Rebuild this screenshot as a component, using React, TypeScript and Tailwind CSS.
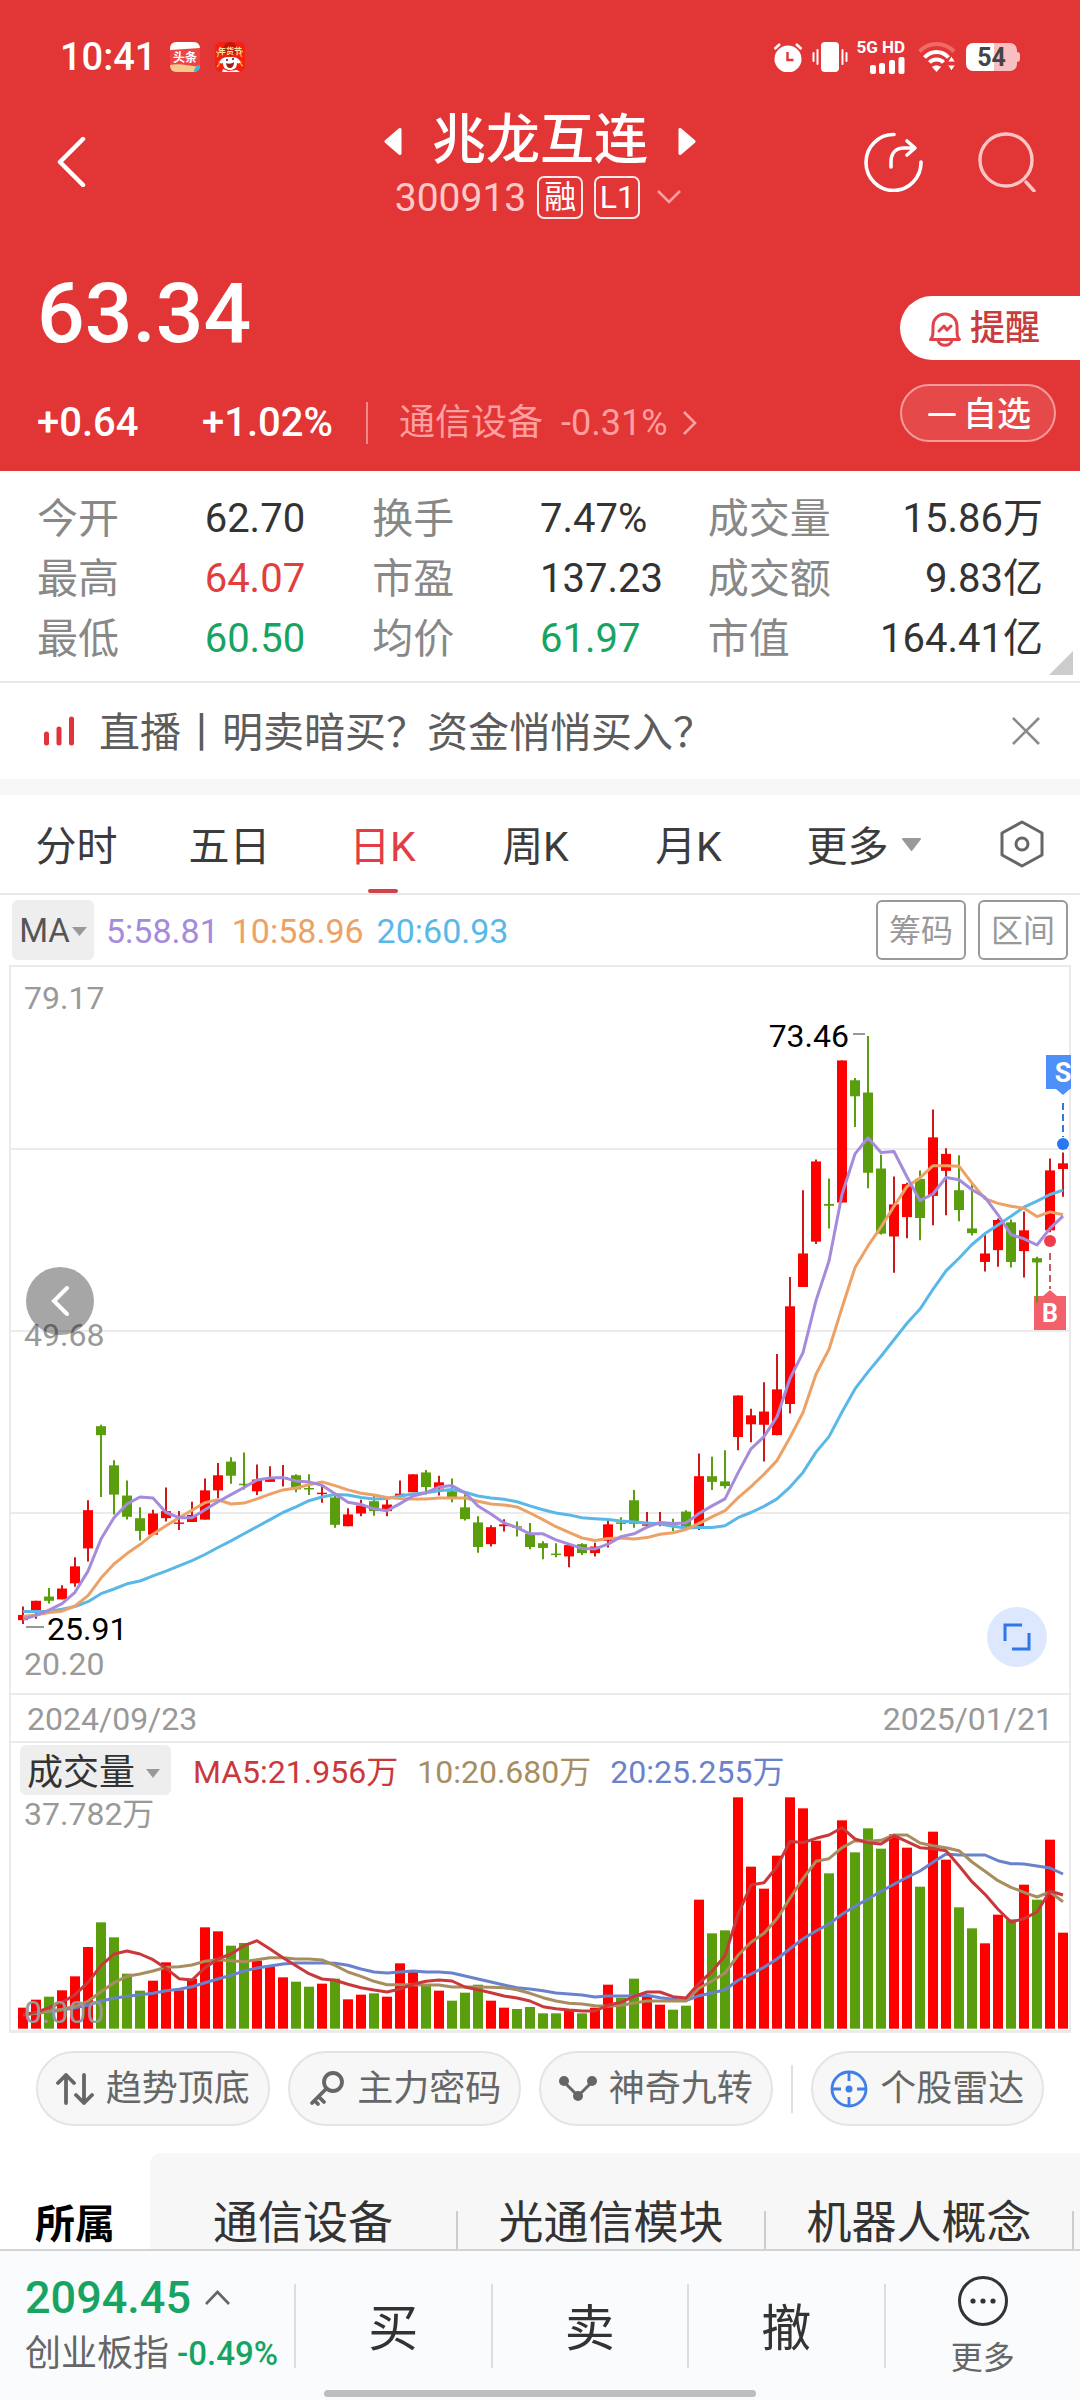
import { useState } from "react";
import type { ReactNode } from "react";

const UP = "#ff0000";
const DOWN = "#5a9e0e";

const STEP = 13;
const candleX = (i: number) => 12 + i * STEP;

// direction, high, body top, body bottom, low
type Candle = [1 | 0, number, number, number, number];

const CANDLES: Candle[] = [
  [1, 1370, 1388, 1399, 1407], [1, 1358, 1358, 1382, 1396], [0, 1331, 1349, 1358, 1364],
  [1, 1325, 1332, 1355, 1355], [1, 1266, 1285, 1321, 1328], [1, 1145, 1166, 1247, 1275],
  [0, 985, 988, 1007, 1138], [0, 1060, 1071, 1133, 1175], [0, 1103, 1135, 1180, 1186],
  [0, 1160, 1183, 1210, 1230], [1, 1165, 1173, 1218, 1218], [1, 1118, 1168, 1183, 1190],
  [1, 1168, 1192, 1195, 1208], [1, 1148, 1176, 1191, 1191], [1, 1099, 1124, 1186, 1186],
  [1, 1066, 1092, 1124, 1140], [0, 1054, 1063, 1093, 1110], [0, 1044, 1110, 1113, 1122],
  [1, 1069, 1101, 1126, 1134], [1, 1073, 1099, 1106, 1106], [1, 1070, 1096, 1099, 1116],
  [0, 1090, 1092, 1122, 1128], [0, 1090, 1119, 1122, 1134], [1, 1112, 1129, 1132, 1150],
  [0, 1136, 1139, 1197, 1203], [1, 1162, 1175, 1200, 1200], [1, 1144, 1156, 1173, 1179],
  [0, 1134, 1147, 1168, 1178], [1, 1144, 1154, 1168, 1179], [1, 1103, 1131, 1137, 1139],
  [1, 1090, 1090, 1128, 1128], [0, 1081, 1086, 1117, 1133], [1, 1093, 1107, 1120, 1135],
  [0, 1099, 1126, 1142, 1149], [0, 1132, 1160, 1185, 1188], [0, 1179, 1192, 1244, 1256],
  [1, 1198, 1202, 1238, 1243], [1, 1185, 1196, 1200, 1211], [0, 1190, 1200, 1203, 1222],
  [0, 1193, 1216, 1244, 1249], [0, 1232, 1236, 1246, 1270], [0, 1236, 1258, 1261, 1266],
  [1, 1238, 1240, 1264, 1287], [0, 1236, 1238, 1257, 1261], [1, 1235, 1243, 1257, 1264],
  [1, 1184, 1196, 1231, 1245], [0, 1181, 1192, 1195, 1209], [0, 1123, 1145, 1195, 1203],
  [1, 1170, 1196, 1199, 1203], [1, 1170, 1191, 1194, 1200], [0, 1184, 1195, 1198, 1210],
  [0, 1166, 1169, 1201, 1208], [1, 1046, 1094, 1200, 1208], [0, 1053, 1094, 1106, 1123],
  [0, 1039, 1105, 1115, 1120], [1, 923, 923, 1011, 1039], [1, 951, 965, 984, 1022],
  [1, 895, 957, 985, 1063], [1, 835, 910, 1007, 1007], [1, 672, 734, 941, 961],
  [1, 488, 622, 693, 693], [1, 423, 427, 597, 602], [0, 463, 517, 521, 569],
  [1, 213, 213, 514, 514], [0, 250, 255, 289, 354], [0, 161, 281, 451, 484],
  [0, 413, 442, 580, 582], [1, 459, 518, 586, 663], [1, 472, 475, 545, 590],
  [0, 446, 464, 547, 594], [1, 317, 376, 500, 562], [1, 399, 411, 447, 541],
  [0, 414, 488, 530, 554], [0, 475, 569, 579, 584], [1, 583, 622, 640, 660],
  [1, 548, 551, 615, 650], [0, 550, 556, 640, 652], [1, 533, 573, 617, 673],
  [0, 629, 632, 641, 726], [1, 421, 446, 573, 577], [1, 408, 431, 443, 502],
];

const PRICE_MA = [
  {
    color: "#5ab8e8",
    values: [
      1381, 1381, 1380, 1376, 1370, 1360, 1343, 1333, 1322, 1316, 1305, 1295, 1284, 1273, 1260, 1245, 1231,
      1216, 1201, 1186, 1171, 1159, 1146, 1138, 1133, 1134, 1139, 1142, 1141, 1136, 1132, 1129, 1125, 1122,
      1128, 1136, 1140, 1143, 1148, 1157, 1165, 1172, 1176, 1182, 1184, 1186, 1189, 1191, 1193, 1195, 1200,
      1204, 1203, 1203, 1199, 1182, 1171, 1158, 1142, 1117, 1086, 1043, 1010, 958, 909, 873, 840, 805, 770,
      740, 698, 659, 632, 603, 580, 562, 543, 524, 511, 497, 488,
    ],
  },
  {
    color: "#eca267",
    values: [
      1391, 1388, 1383, 1380, 1369, 1347, 1310, 1280, 1258, 1239, 1217, 1199, 1182, 1166, 1150, 1144, 1153,
      1151, 1142, 1132, 1123, 1119, 1112, 1106, 1114, 1123, 1130, 1134, 1139, 1141, 1142, 1142, 1140, 1140,
      1140, 1147, 1153, 1155, 1159, 1172, 1186, 1201, 1213, 1225, 1230, 1226, 1225, 1227, 1224, 1217, 1214,
      1207, 1194, 1180, 1167, 1140, 1116, 1090, 1061, 1012, 959, 878, 825, 737, 652, 606, 566, 522, 480, 462,
      436, 436, 437, 473, 506, 516, 522, 526, 544, 534, 540,
    ],
  },
  {
    color: "#a58bdc",
    values: [
      1397, 1389, 1378, 1364, 1340, 1295, 1227, 1182, 1153, 1138, 1140, 1171, 1182, 1182, 1165, 1148, 1133,
      1118, 1102, 1098, 1097, 1104, 1106, 1113, 1131, 1149, 1154, 1163, 1167, 1152, 1136, 1129, 1117, 1114,
      1129, 1157, 1174, 1193, 1203, 1216, 1216, 1229, 1238, 1247, 1248, 1238, 1222, 1216, 1202, 1192, 1194,
      1193, 1173, 1157, 1142, 1087, 1036, 1010, 968, 887, 832, 722, 638, 497, 411, 377, 408, 406, 460, 510,
      496, 461, 466, 487, 503, 540, 582, 591, 604, 569, 543,
    ],
  },
];

const VOLUMES = [
  983, 959, 950, 931, 889, 801, 727, 772, 881, 932, 902, 847, 931, 896, 742, 754, 797, 789, 842, 860, 892,
  905, 920, 911, 896, 958, 944, 940, 950, 850, 871, 917, 932, 962, 938, 914, 962, 983, 987, 981, 1000, 1000,
  988, 1000, 983, 914, 953, 896, 947, 974, 989, 977, 659, 760, 751, 352, 560, 626, 527, 352, 385, 482, 580,
  421, 517, 445, 506, 463, 503, 620, 455, 539, 682, 745, 790, 704, 718, 614, 659, 479, 758,
];

const VOLUME_MA = [
  {
    color: "#6a82cc",
    values: [
      1004, 1000, 996, 990, 983, 975, 963, 955, 949, 944, 940, 932, 928, 920, 908, 897, 886, 873, 864, 858,
      852, 849, 849, 849, 850, 856, 867, 876, 879, 876, 873, 876, 876, 879, 888, 897, 906, 915, 923, 927, 932,
      939, 942, 945, 951, 948, 948, 948, 946, 953, 958, 962, 947, 939, 929, 901, 882, 862, 837, 806, 776, 753,
      732, 703, 679, 657, 634, 613, 592, 573, 547, 522, 525, 525, 525, 542, 551, 552, 558, 564, 582,
    ],
  },
  {
    color: "#a88d60",
    values: [
      1004, 1000, 994, 988, 979, 964, 935, 908, 889, 882, 873, 862, 860, 855, 844, 839, 842, 845, 839, 833,
      833, 837, 837, 840, 856, 876, 889, 904, 914, 914, 914, 915, 915, 921, 921, 921, 922, 923, 929, 940, 953,
      963, 970, 972, 977, 979, 976, 969, 963, 963, 963, 963, 925, 903, 879, 826, 787, 760, 716, 655, 596, 544,
      536, 503, 482, 484, 481, 465, 465, 489, 497, 503, 512, 546, 574, 602, 622, 637, 651, 636, 665,
    ],
  },
  {
    color: "#c9393c",
    values: [
      1004, 997, 983, 967, 944, 907, 857, 822, 813, 822, 839, 865, 896, 900, 863, 837, 822, 797, 782, 807,
      833, 857, 881, 897, 901, 913, 923, 930, 936, 927, 913, 904, 900, 903, 921, 929, 938, 948, 954, 963, 980,
      986, 990, 993, 993, 976, 967, 949, 936, 936, 950, 954, 910, 874, 827, 703, 615, 608, 560, 484, 488, 475,
      465, 443, 477, 488, 492, 467, 485, 503, 506, 512, 557, 605, 643, 688, 726, 716, 696, 633, 645,
    ],
  },
];

const priceY = (v: number) => (v - 15) / 2.119;
const volumeY = (v: number) => v / 3 - 117;

function linePoints(values: number[], toY: (v: number) => number) {
  return values.map((v, i) => `${candleX(i)},${toY(v).toFixed(1)}`).join(" ");
}

const QUOTES = [
  [["今开", "62.70", "text-[#333]"], ["换手", "7.47%", "text-[#333]"], ["成交量", "15.86万", "text-[#333]"]],
  [["最高", "64.07", "text-[#e23e3e]"], ["市盈", "137.23", "text-[#333]"], ["成交额", "9.83亿", "text-[#333]"]],
  [["最低", "60.50", "text-[#17a462]"], ["均价", "61.97", "text-[#17a462]"], ["市值", "164.41亿", "text-[#333]"]],
];

const PERIODS = ["分时", "五日", "日K", "周K", "月K"];
const SECTORS = ["通信设备", "光通信模块", "机器人概念"];

function StatusBar() {
  return (
    <div className="flex h-[114px] items-center justify-between pr-[60px] pl-[60px]">
      <div className="flex items-center gap-[14px]">
        <span className="text-[38px] font-medium leading-10">10:41</span>
        <div className="flex gap-[15px]">
          <svg className="size-[30px]" viewBox="0 0 30 30">
            <defs>
              <clipPath id="tt"><rect width="30" height="30" rx="6" /></clipPath>
            </defs>
            <g clipPath="url(#tt)">
              <rect width="30" height="30" fill="#ef4444" />
              <path d="M0 0h30v6L0 8z" fill="#fff" />
              <path d="M0 23c8-2 16 0 30 2v5H0z" fill="#f6c98c" />
              <path d="M24 30c0-4 3-7 6-7v7z" fill="#38b6d8" />
              <text x="15" y="20" textAnchor="middle" className="text-[12px] font-bold" fill="#fff">头条</text>
            </g>
          </svg>
          <svg className="size-[30px]" viewBox="0 0 30 30">
            <rect width="30" height="30" rx="6" fill="#f5200f" />
            <path d="M1 10c3 0 3 4 1 5M28 9c-3 1-3 4-1 6M2 25c2-2 3-4 2-6M28 24c-2-1-3-3-2-5" fill="none" stroke="#f2a63c" strokeWidth="1.4" />
            <circle cx="15" cy="7" r="7" fill="#c4170c" />
            <text x="15" y="12" textAnchor="middle" className="text-[8px] font-bold" fill="#ffe3a0">年货节</text>
            <path d="M5 19c2-4 7-4 10-4s8 0 10 4c1 2-1 3-3 2 0 5-3 7-7 7s-7-2-7-7c-2 1-4 0-3-2z" fill="#fff" />
            <path d="M11 21c2 1 6 1 8-1 0 4-2 6-4 6s-4-2-4-5z" fill="#9b2016" />
            <circle cx="12" cy="18" r="1" fill="#222" />
            <circle cx="18" cy="17" r="1" fill="#222" />
            <path d="M8 27l5 2 9-1 3 2H7z" fill="#fff" />
          </svg>
        </div>
      </div>

      <div className="flex items-center gap-[9px]">
        <svg className="h-[30px] w-[30px]" viewBox="0 0 30 30">
          <circle cx="15" cy="17" r="13.5" fill="#fff" />
          <path d="M1.5 7 7 2M28.5 7 23 2" stroke="#fff" strokeWidth="2.6" />
          <path d="M14.5 10v8h6" fill="none" stroke="#e23536" strokeWidth="2.4" />
        </svg>
        <svg className="h-[30px] w-[36px]" viewBox="0 0 36 30">
          <rect x="9" width="18" height="30" rx="4" fill="#fff" />
          <path d="M1.5 11v8M5.5 8v14M30.5 8v14M34.5 11v8" stroke="#fff" strokeWidth="2" strokeLinecap="round" />
        </svg>
        <div className="flex w-12 flex-col items-end gap-[3px]">
          <span className="whitespace-nowrap text-[17px] font-bold leading-[14px]">5G HD</span>
          <svg className="h-[17px] w-[36px]" viewBox="0 0 36 17">
            <rect x="1" y="8" width="6" height="9" rx="2" fill="#fff" />
            <rect x="10" y="6" width="6" height="11" rx="2" fill="#fff" />
            <rect x="20" y="3" width="6" height="14" rx="2" fill="#fff" />
            <rect x="29.500" y="0" width="6" height="17" rx="2" fill="#fff" />
          </svg>
        </div>
        <svg className="ml-1 h-[30px] w-[38px]" viewBox="0 0 38 30">
          <g fill="none" stroke="#fff" strokeWidth="4">
            <path d="M1.500 9.500C11-.5 26-.5 36 9.500" stroke="#f06a68" />
            <path d="M6.500 15.500C13 8 24 8 30.500 15.500" />
            <path d="M11.500 20.500C15 16.500 22 16.500 25.500 20.500" />
          </g>
          <path d="M14 25c2-2 7-2 9 0l-4.500 5z" fill="#fff" />
          <path d="M33.500 14l4 6h-8zM33.500 29l4-6h-8z" fill="#fff" stroke="#e23536" strokeWidth="1" />
        </svg>
        <div className="ml-[1px] flex items-center">
          <div className="flex h-[28px] w-[51px] items-center justify-center rounded-[7px] bg-linear-to-r from-white from-55% to-[#f7bfc0] to-55% pt-[2px] text-[25px] font-bold text-[#444]">
            54
          </div>
          <div className="h-[10px] w-[3px] rounded-r bg-[#f7bfc0]" />
        </div>
      </div>
    </div>
  );
}

function Header() {
  return (
    <header className="bg-[#e23536] text-white">
      <StatusBar />

      <div className="grid h-[106px] grid-cols-[1fr_auto_1fr] items-start">
        <button aria-label="返回" className="flex h-24 w-24 items-center pl-[57px]">
          <svg className="h-[50px] w-[30px] shrink-0" viewBox="0 0 30 50">
            <path d="M26 2 3 25l23 23" fill="none" stroke="#fff" strokeWidth="4.500" strokeLinecap="round" strokeLinejoin="round" />
          </svg>
        </button>

        <div className="flex flex-col items-center">
          <div className="flex h-[54px] items-center gap-[30px]">
            <button aria-label="上一只">
              <svg className="h-[27px] w-[18px]" viewBox="0 0 18 27">
                <path d="M16 1.500v24L2 13.500z" fill="#fff" stroke="#fff" strokeWidth="3" strokeLinejoin="round" />
              </svg>
            </button>
            <h1 className="text-[54px] font-medium leading-none">兆龙互连</h1>
            <button aria-label="下一只">
              <svg className="h-[27px] w-[18px]" viewBox="0 0 18 27">
                <path d="M2 1.500v24l14-12z" fill="#fff" stroke="#fff" strokeWidth="3" strokeLinejoin="round" />
              </svg>
            </button>
          </div>
          <div className="mt-[6px] flex h-[46px] items-center gap-[11px] pr-1">
            <span className="pt-[2px] text-[39px] text-[#ffc8c8]">300913</span>
            <span className="flex h-[43px] w-[46px] items-center justify-center rounded-[7px] border-2 border-white/90 text-[32px]">融</span>
            <span className="flex h-[43px] w-[46px] items-center justify-center rounded-[7px] border-2 border-white/90 text-[32px]">L1</span>
            <svg className="ml-[6px] h-[14px] w-[24px]" viewBox="0 0 24 14">
              <path d="M1 1l11 11L23 1" fill="none" stroke="#ff9f9f" strokeWidth="2.600" />
            </svg>
          </div>
        </div>

        <div className="flex h-24 items-center justify-end gap-[54px] pr-[43px]">
          <button aria-label="分享">
            <svg className="size-[60px]" viewBox="0 0 60 60" fill="none" stroke="#fff" strokeWidth="3.600" strokeLinecap="round" strokeLinejoin="round">
              <path d="M31 2.500A27.500 28 0 1 0 58 30" />
              <path d="M28 35v-5c0-9 5-14 13-14h11M44 9l8 7-8 7" />
            </svg>
          </button>
          <button aria-label="搜索">
            <svg className="size-[60px]" viewBox="0 0 60 60" fill="none" stroke="#ffc4c4" strokeWidth="3.400" strokeLinecap="round">
              <circle cx="29" cy="28" r="26" />
              <path d="M49 50l8 9" />
            </svg>
          </button>
        </div>
      </div>

      <div className="flex justify-between pb-[25px] pl-[37px]">
        <div className="pt-[48px]">
          <div className="h-[92px] text-[84px] font-medium leading-[92px]">63.34</div>
          <div className="mt-[40px] flex h-[46px] items-center text-[40px] font-medium">
            <span className="w-[165px]">+0.64</span>
            <span className="w-[164px]">+1.02%</span>
            <a href="#sector" className="flex h-[42px] items-center border-l-2 border-[#f08a8a] pl-[31px] text-[36px] font-normal text-[#ff9f9f]">
              通信设备
              <span className="ml-[18px]">-0.31%</span>
              <svg className="ml-[14px] h-6 w-[15px]" viewBox="0 0 15 24">
                <path d="M2 1l11 11L2 23" fill="none" stroke="#ff9f9f" strokeWidth="2.600" />
              </svg>
            </a>
          </div>
        </div>
        <div className="flex flex-col items-start pt-[76px]">
          <button className="flex h-[64px] w-[180px] items-center gap-[8px] rounded-l-full bg-white pt-[2px] pl-[28px] text-[35px] font-medium text-[#c93c3e]">
            <svg className="h-[36px] w-[34px]" viewBox="0 0 34 36" fill="none" stroke="#e0444a" strokeWidth="3" strokeLinecap="round" strokeLinejoin="round">
              <path d="M2.500 28.500C5 26 5 24 5 15a12 12 0 0 1 24 0c0 9 0 11 2.500 13.500z" />
              <path d="M10 29c1 7 13 7 14 0M11 20l5-5 3 4 4-4" />
            </svg>
            提醒
          </button>
          <button className="mt-6 flex h-[58px] w-[156px] items-center gap-[7px] rounded-full border-2 border-[#f59a9a] bg-white/10 pt-[2px] pl-[26px] text-[34px] font-medium">
            <span className="h-[3px] w-[28px] rounded bg-white" />
            自选
          </button>
        </div>
      </div>
    </header>
  );
}

function QuoteTable() {
  return (
    <section className="relative border-b-2 border-[#e8e8e8] pt-[18px] pb-[12px]">
      {QUOTES.map((row) => (
        <dl key={row[0][0]} className="grid h-[60px] grid-cols-3 items-center px-[37px] text-[40px] leading-[60px]">
          {row.map(([label, value, color], i) => (
            <div key={label} className="flex">
              <dt className={i === 2 ? "flex-1 text-[41px] text-[#888]" : "w-1/2 text-[41px] text-[#888]"}>{label}</dt>
              <dd className={color}>{value}</dd>
            </div>
          ))}
        </dl>
      ))}
      <svg className="absolute right-[7px] bottom-[6px] size-6" viewBox="0 0 24 24">
        <path d="M24 0v24H0z" fill="#ccc" />
      </svg>
    </section>
  );
}

function LiveBanner({ onClose }: { onClose: () => void }) {
  return (
    <div className="flex h-24 items-center pr-[40px] pl-[43px]">
      <svg className="h-[30px] w-[32px]" viewBox="0 0 32 30">
        <path d="M3.500 18v9M16 13v14M28.500 3v24" stroke="#e0343c" strokeWidth="5" strokeLinecap="round" />
      </svg>
      <a href="#live" className="ml-[24px] flex-1 pt-[6px] text-[41px] text-[#5c5c5c]">直播丨明卖暗买？资金悄悄买入？</a>
      <button aria-label="关闭" onClick={onClose}>
        <svg className="size-7" viewBox="0 0 28 28">
          <path d="M1 1l26 26M27 1 1 27" stroke="#8a8a8a" strokeWidth="2.600" />
        </svg>
      </button>
    </div>
  );
}

function PeriodTabs() {
  const [active, setActive] = useState("日K");

  return (
    <nav className="grid h-[100px] grid-cols-[17fr_17fr_17fr_17fr_17fr_22fr_13fr] border-b-2 border-[#e8e8e8] text-[41px] leading-[94px] text-[#3c3c3c]">
      {PERIODS.map((p) => (
        <button
          key={p}
          onClick={() => setActive(p)}
          className={p === active ? "flex h-[98px] flex-col items-center text-[#e23c46]" : "flex h-[98px] flex-col items-center"}
        >
          <span className="h-[94px] pt-[5px]">{p}</span>
          {p === active && <span className="h-1 w-[30px] shrink-0 rounded bg-[#d0424c]" />}
        </button>
      ))}
      <button className="flex h-[98px] items-center justify-center gap-[12px]">
        <span className="pt-[6px]">更多</span>
        <svg className="h-[13px] w-[21px]" viewBox="0 0 21 13">
          <path d="M2 1h17l-8.500 11z" fill="#999" stroke="#999" strokeWidth="2" strokeLinejoin="round" />
        </svg>
      </button>
      <button aria-label="设置" className="flex h-[98px] items-center justify-center">
        <svg className="h-[48px] w-[44px]" viewBox="0 0 44 48" fill="none" stroke="#666" strokeWidth="3" strokeLinejoin="round">
          <path d="M22 2l20 11v22L22 46 2 35V13z" />
          <circle cx="22" cy="24" r="6" />
        </svg>
      </button>
    </nav>
  );
}

function PriceChart() {
  return (
    <div className="relative border-b-2 border-[#ebebeb]">
      <svg className="block w-full overflow-visible" viewBox="0 0 1058 726">
        {[182, 364, 546].map((y) => (
          <line key={y} x1="0" x2="1058" y1={y} y2={y} stroke="#ebebeb" strokeWidth="2" />
        ))}

        {/* sell and buy flags */}
        <path d="M1035 88h25v34h-1l-7 6-7-6h-10z" fill="#4f90f8" />
        <text x="1052" y="115" textAnchor="middle" className="text-[27px] font-bold" fill="#fff">S</text>
        <path d="M1052 136v34" stroke="#2f7ae0" strokeWidth="2" strokeDasharray="7 4" />
        <circle cx="1052" cy="177" r="6" fill="#2a78f0" />
        <path d="M1023 329h9l7-6 7 6h9v34h-32z" fill="#f2606b" />
        <text x="1039" y="355" textAnchor="middle" className="text-[25px] font-bold" fill="#fff">B</text>
        <path d="M1039 286v36" stroke="#c85a68" strokeWidth="2" strokeDasharray="7 4" />
        <circle cx="1039" cy="274" r="6" fill="#f03c4a" />

        {CANDLES.map(([up, high, top, bottom, low], i) => (
          <g key={i}>
            <line x1={candleX(i)} x2={candleX(i)} y1={priceY(high)} y2={priceY(low)} stroke={up ? "#cc1a1a" : DOWN} strokeWidth="2" />
            <rect x={candleX(i) - 5} y={priceY(top)} width="10" height={priceY(bottom) - priceY(top)} fill={up ? UP : DOWN} />
          </g>
        ))}

        {PRICE_MA.map((ma) => (
          <polyline key={ma.color} points={linePoints(ma.values, priceY)} fill="none" stroke={ma.color} strokeWidth="3" strokeLinejoin="round" />
        ))}

        <g className="text-[32px]" fill="#999">
          <text x="13" y="42">79.17</text>
          <text x="13" y="379">49.68</text>
          <text x="13" y="708">20.20</text>
        </g>
        <g className="text-[32px]" fill="#000">
          <text x="36" y="673">25.91</text>
          <text x="838" y="80" textAnchor="end">73.46</text>
        </g>
        <path d="M15 660h18M842 67h12" stroke="#777" strokeWidth="1.500" />
      </svg>

      <button aria-label="更早" className="absolute top-[300px] left-[15px] flex size-[68px] items-center justify-center rounded-full bg-black/35">
        <svg className="h-[30px] w-[18px]" viewBox="0 0 18 30">
          <path d="M16 2 3 15l13 13" fill="none" stroke="#fff" strokeWidth="4" strokeLinecap="round" />
        </svg>
      </button>
      <button aria-label="全屏" className="absolute right-[22px] bottom-[26px] flex size-[60px] items-center justify-center rounded-full bg-[#dde8fe]">
        <svg className="size-7" viewBox="0 0 28 28" fill="none" stroke="#2f76e8" strokeWidth="3">
          <path d="M2 18V2h17M9 26h17V10" />
        </svg>
      </button>
    </div>
  );
}

function VolumeChart() {
  return (
    <svg className="block w-full overflow-visible" viewBox="0 0 1058 233">
      {VOLUMES.map((v, i) => (
        <rect key={i} x={candleX(i) - 5} y={volumeY(v)} width="10" height={volumeY(1046) - volumeY(v)} fill={CANDLES[i][0] ? UP : DOWN} />
      ))}
      {VOLUME_MA.map((ma) => (
        <polyline key={ma.color} points={linePoints(ma.values, volumeY)} fill="none" stroke={ma.color} strokeWidth="3" strokeLinejoin="round" />
      ))}
      <g className="text-[32px]" fill="#999">
        <text x="13" y="28">37.782万</text>
        <text x="13" y="226">0.000</text>
      </g>
    </svg>
  );
}

function ChartPanel() {
  return (
    <section>
      <div className="flex h-[70px] items-center px-3">
        <button className="flex h-[60px] w-[82px] items-center justify-center gap-[2px] rounded-md bg-[#eee] pt-[2px] text-[33px] text-[#555]">
          MA
          <svg className="h-[9px] w-[15px]" viewBox="0 0 15 9">
            <path d="M0 0h15L7.500 9z" fill="#999" />
          </svg>
        </button>
        <div className="ml-[12px] flex flex-1 gap-[13px] pt-[2px] text-[34px]">
          <span className="text-[#a58bdc]">5:58.81</span>
          <span className="text-[#eca267]">10:58.96</span>
          <span className="text-[#5ab8e8]">20:60.93</span>
        </div>
        <div className="flex gap-3 text-[32px] text-[#999]">
          <button className="h-[60px] w-[90px] rounded-md border-2 border-[#999] pt-[2px]">筹码</button>
          <button className="h-[60px] w-[90px] rounded-md border-2 border-[#999] pt-[2px]">区间</button>
        </div>
      </div>

      <div className="mx-[9px] border-2 border-b-3 border-[#ebebeb]">
        <PriceChart />
        <div className="flex h-[48px] items-center justify-between border-b-2 border-[#ebebeb] px-[16px] pt-[2px] text-[32px] text-[#999]">
          <time>2024/09/23</time>
          <time>2025/01/21</time>
        </div>
        <div className="flex h-[54px] items-center pl-[9px]">
          <button className="flex h-[50px] w-[151px] items-center gap-[11px] rounded-md bg-[#eee] pt-[6px] pl-[7px] text-[36px] leading-[44px] text-[#333]">
            成交量
            <svg className="h-[9px] w-[14px]" viewBox="0 0 14 9">
              <path d="M0 0h14L7 9z" fill="#999" />
            </svg>
          </button>
          <div className="ml-[22px] flex gap-[19px] pt-1 text-[32px]">
            <span className="text-[#c9393c]">MA5:21.956万</span>
            <span className="text-[#a88d60]">10:20.680万</span>
            <span className="text-[#6a82cc]">20:25.255万</span>
          </div>
        </div>
        <VolumeChart />
      </div>
    </section>
  );
}

function Chip({ icon, children }: { icon: ReactNode; children: ReactNode }) {
  return (
    <button className="flex h-[75px] flex-1 items-center justify-center gap-[12px] whitespace-nowrap rounded-full border-2 border-[#e4e4e4] bg-[#f7f7f7] text-[36px] text-[#666]">
      {icon}
      {children}
    </button>
  );
}

function ToolChips() {
  return (
    <div className="flex items-center gap-[18px] px-9 pt-[18px] pb-[27px]">
      <Chip
        icon={
          <svg className="size-[38px]" viewBox="0 0 38 38" fill="none" stroke="#666" strokeWidth="3.800" strokeLinecap="round" strokeLinejoin="round">
            <path d="M10 33V5M2 13l8-8 8 8M28 5v28M20 25l8 8 8-8" />
          </svg>
        }
      >
        趋势顶底
      </Chip>
      <Chip
        icon={
          <svg className="size-[38px]" viewBox="0 0 38 38" fill="none" stroke="#666" strokeWidth="3.800" strokeLinecap="round">
            <circle cx="26" cy="12" r="9" />
            <path d="M19 19 5 33M12 27l5 5M8 31l3 3" />
          </svg>
        }
      >
        主力密码
      </Chip>
      <Chip
        icon={
          <svg className="size-[38px]" viewBox="0 0 38 38">
            <path d="M5 12l14 14 14-14" fill="none" stroke="#666" strokeWidth="3" />
            <circle cx="5" cy="11" r="5" fill="#666" />
            <circle cx="33" cy="11" r="5" fill="#666" />
            <circle cx="19" cy="26" r="5" fill="#666" />
          </svg>
        }
      >
        神奇九转
      </Chip>
      <span className="h-12 w-[2px] bg-[#e0e0e0]" />
      <Chip
        icon={
          <svg className="size-[38px]" viewBox="0 0 38 38" fill="none" stroke="#3f7fe8" strokeWidth="2.800">
            <circle cx="19" cy="19" r="17" />
            <path d="M19 2v9M19 27v9M2 19h9M27 19h9" />
            <circle cx="19" cy="19" r="3.500" fill="#3f7fe8" stroke="none" />
          </svg>
        }
      >
        个股雷达
      </Chip>
    </div>
  );
}

function SectorTabs() {
  return (
    <div id="sector" className="flex h-24 overflow-hidden">
      <h2 className="w-[150px] shrink-0 pt-[45px] pl-[35px] text-[40px] font-bold leading-[54px] text-black">所属</h2>
      <div className="flex flex-1 items-end overflow-hidden rounded-tl-xl bg-[#f7f7f7]">
        {SECTORS.map((s) => (
          <div key={s} className="flex w-[308px] shrink-0 items-end">
            <a href="#sector" className="flex-1 text-center text-[45px] leading-[50px] text-[#333]">{s}</a>
            <span className="h-[38px] w-[2px] bg-[#ccc]" />
          </div>
        ))}
      </div>
    </div>
  );
}

function TradeBar() {
  return (
    <footer className="relative flex h-[151px] items-center border-t-2 border-[#d2d3d5] bg-[#fafbfd]">
      <button className="w-[294px] shrink-0 pl-[25px] text-left">
        <div className="flex h-[56px] items-center gap-[14px] text-[45px] font-medium text-[#17a462]">
          2094.45
          <svg className="h-[15px] w-[25px]" viewBox="0 0 25 15">
            <path d="M1 14 12.500 2 24 14" fill="none" stroke="#666" strokeWidth="2.600" />
          </svg>
        </div>
        <div className="flex h-[56px] items-center gap-[8px] whitespace-nowrap text-[36px] text-[#666]">
          创业板指
          <span className="text-[33px] font-medium text-[#17a462]">-0.49%</span>
        </div>
      </button>
      {["买", "卖", "撤"].map((label) => (
        <button key={label} className="h-[84px] flex-1 border-l-2 border-[#dcdde0] pt-2 text-[50px] text-[#333]">
          {label}
        </button>
      ))}
      <button className="flex h-[84px] flex-1 flex-col items-center justify-center gap-[12px] border-l-2 border-[#dcdde0] pt-[2px] text-[32px] leading-10 text-[#666]">
        <svg className="size-[50px] shrink-0" viewBox="0 0 50 50">
          <circle cx="25" cy="25" r="23.500" fill="none" stroke="#333" strokeWidth="3" />
          <circle cx="15" cy="25" r="2.600" fill="#333" />
          <circle cx="25" cy="25" r="2.600" fill="#333" />
          <circle cx="35" cy="25" r="2.600" fill="#333" />
        </svg>
        更多
      </button>
      <div className="absolute bottom-[3px] left-[30%] h-[7px] w-2/5 rounded-full bg-[#bdbec0]" />
    </footer>
  );
}

export default function App() {
  const [bannerOpen, setBannerOpen] = useState(true);

  return (
    <div className="min-h-screen bg-white font-['Roboto','Noto_Sans_CJK_SC',sans-serif]">
      <Header />
      <QuoteTable />
      {bannerOpen && <LiveBanner onClose={() => setBannerOpen(false)} />}
      <div className="h-4 bg-[#f7f7f7]" />
      <PeriodTabs />
      <ChartPanel />
      <ToolChips />
      <SectorTabs />
      <TradeBar />
    </div>
  );
}
